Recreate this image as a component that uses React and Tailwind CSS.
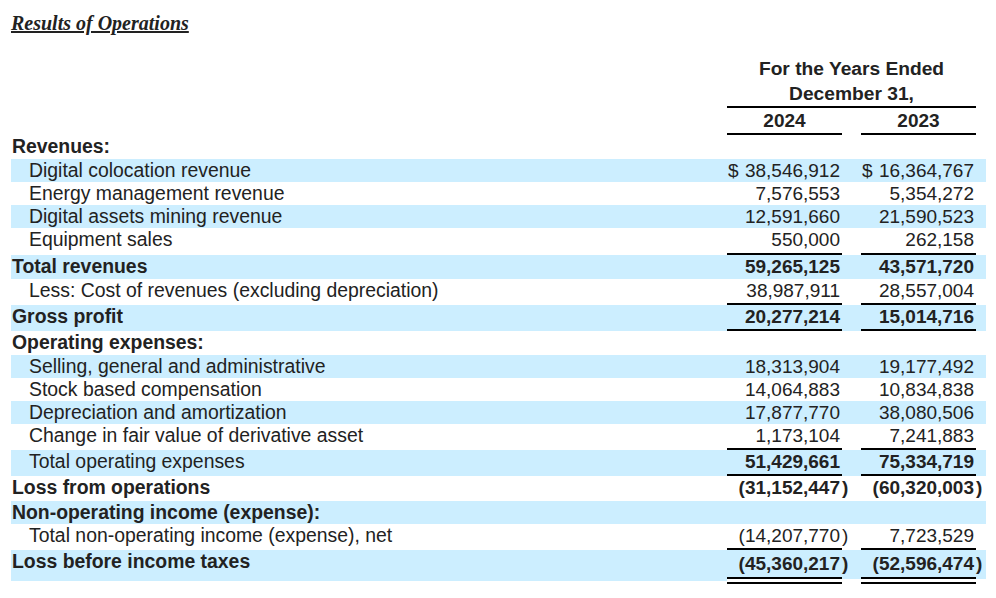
import React from "react";

const BLUE = "bg-[#cceeff]";

const rows = [
  { label: "Revenues:", bold: true, h: "h-[24px]" },
  { label: "Digital colocation revenue", indent: true, blue: true, h: "h-[23px]", v1: "38,546,912", v2: "16,364,767", dollar: true },
  { label: "Energy management revenue", indent: true, h: "h-[23px]", v1: "7,576,553", v2: "5,354,272" },
  { label: "Digital assets mining revenue", indent: true, blue: true, h: "h-[23px]", v1: "12,591,660", v2: "21,590,523" },
  { label: "Equipment sales", indent: true, h: "h-[27px]", ul: true, v1: "550,000", v2: "262,158" },
  { label: "Total revenues", bold: true, blue: true, h: "h-[24px]", v1: "59,265,125", v2: "43,571,720" },
  { label: "Less: Cost of revenues (excluding depreciation)", indent: true, h: "h-[26px]", ul: true, v1: "38,987,911", v2: "28,557,004" },
  { label: "Gross profit", bold: true, blue: true, h: "h-[26px]", ul: true, v1: "20,277,214", v2: "15,014,716" },
  { label: "Operating expenses:", bold: true, h: "h-[24px]" },
  { label: "Selling, general and administrative", indent: true, blue: true, h: "h-[23px]", v1: "18,313,904", v2: "19,177,492" },
  { label: "Stock based compensation", indent: true, h: "h-[23px]", v1: "14,064,883", v2: "10,834,838" },
  { label: "Depreciation and amortization", indent: true, blue: true, h: "h-[23px]", v1: "17,877,770", v2: "38,080,506" },
  { label: "Change in fair value of derivative asset", indent: true, h: "h-[26px]", ul: true, v1: "1,173,104", v2: "7,241,883" },
  { label: "Total operating expenses", indent: true, blue: true, h: "h-[26px]", ul: true, v1: "51,429,661", v2: "75,334,719", boldNum: true },
  { label: "Loss from operations", bold: true, h: "h-[25px]", v1: "(31,152,447", n1: true, v2: "(60,320,003", n2: true },
  { label: "Non-operating income (expense):", bold: true, blue: true, h: "h-[23px]" },
  { label: "Total non-operating income (expense), net", indent: true, h: "h-[26px]", ul: true, v1: "(14,207,770", n1: true, v2: "7,723,529" },
];

function NumCell({ value, dollar, ul, h, bg }) {
  return (
    <div
      className={`w-[115px] ${h} ${bg} ${ul ? "border-b-2 border-black" : ""} flex justify-between pl-[1px] pr-[2px] leading-[23px]`}
    >
      <span>{dollar ? "$" : ""}</span>
      <span>{value || ""}</span>
    </div>
  );
}

function Paren({ show, w, h, bg }) {
  return <div className={`${w} ${h} ${bg} leading-[23px]`}>{show ? ")" : ""}</div>;
}

function Row({ r }) {
  const bg = r.blue ? BLUE : "";
  return (
    <div className={`flex ${r.bold ? "font-bold" : ""}`}>
      <div className={`w-[716px] ${r.h} ${bg} ${r.indent ? "pl-[18px]" : "pl-[1px]"} text-[19.4px] leading-[23px] ${r.boldNum ? "font-normal" : ""}`}>
        {r.label}
      </div>
      <div className={`flex ${r.boldNum ? "font-bold" : ""}`}>
        <NumCell value={r.v1} dollar={r.dollar} ul={r.ul} h={r.h} bg={bg} />
        <Paren show={r.n1} w="w-[19px]" h={r.h} bg={bg} />
        <NumCell value={r.v2} dollar={r.dollar} ul={r.ul} h={r.h} bg={bg} />
        <Paren show={r.n2} w="w-[10px]" h={r.h} bg={bg} />
      </div>
    </div>
  );
}

function LastNum({ value }) {
  return (
    <div className="w-[115px] h-[34px] flex flex-col">
      <div className={`h-[29px] ${BLUE} border-b-2 border-black flex justify-end pr-[2px] pt-[2px] leading-[23px]`}>
        {value}
      </div>
      <div className="h-[5px] border-b-2 border-black" />
    </div>
  );
}

export default function App() {
  return (
    <div className="w-[996px] h-[598px] bg-white pl-[11px] pt-[12px] text-[19px] text-[#222222] font-['Liberation_Sans',Arial,sans-serif]">
      <div className="h-[23px] leading-[23px] font-['Liberation_Serif','Times_New_Roman',serif] text-[20px] font-bold italic underline">
        Results of Operations
      </div>

      <div className="flex mt-[21px] font-bold leading-[25px] text-[19.2px]">
        <div className="w-[716px]" />
        <div className="w-[249px] text-center">
          <div className="h-[25px]">For the Years Ended</div>
          <div className="h-[27px] border-b-2 border-black">December 31,</div>
        </div>
      </div>
      <div className="flex font-bold leading-[25px]">
        <div className="w-[716px]" />
        <div className="w-[115px] h-[27px] text-center border-b-2 border-black">2024</div>
        <div className="w-[19px]" />
        <div className="w-[115px] h-[27px] text-center border-b-2 border-black">2023</div>
      </div>

      {rows.map((r, i) => (
        <Row key={i} r={r} />
      ))}

      <div className="flex font-bold">
        <div className="w-[716px] h-[34px]">
          <div className={`h-[31px] ${BLUE} pl-[1px] text-[19.4px] leading-[23px]`}>Loss before income taxes</div>
        </div>
        <LastNum value="(45,360,217" />
        <div className="w-[19px] h-[34px]">
          <div className={`h-[29px] ${BLUE} pt-[2px] leading-[23px]`}>)</div>
        </div>
        <LastNum value="(52,596,474" />
        <div className="w-[10px] h-[34px]">
          <div className={`h-[29px] ${BLUE} pt-[2px] leading-[23px]`}>)</div>
        </div>
      </div>
    </div>
  );
}
